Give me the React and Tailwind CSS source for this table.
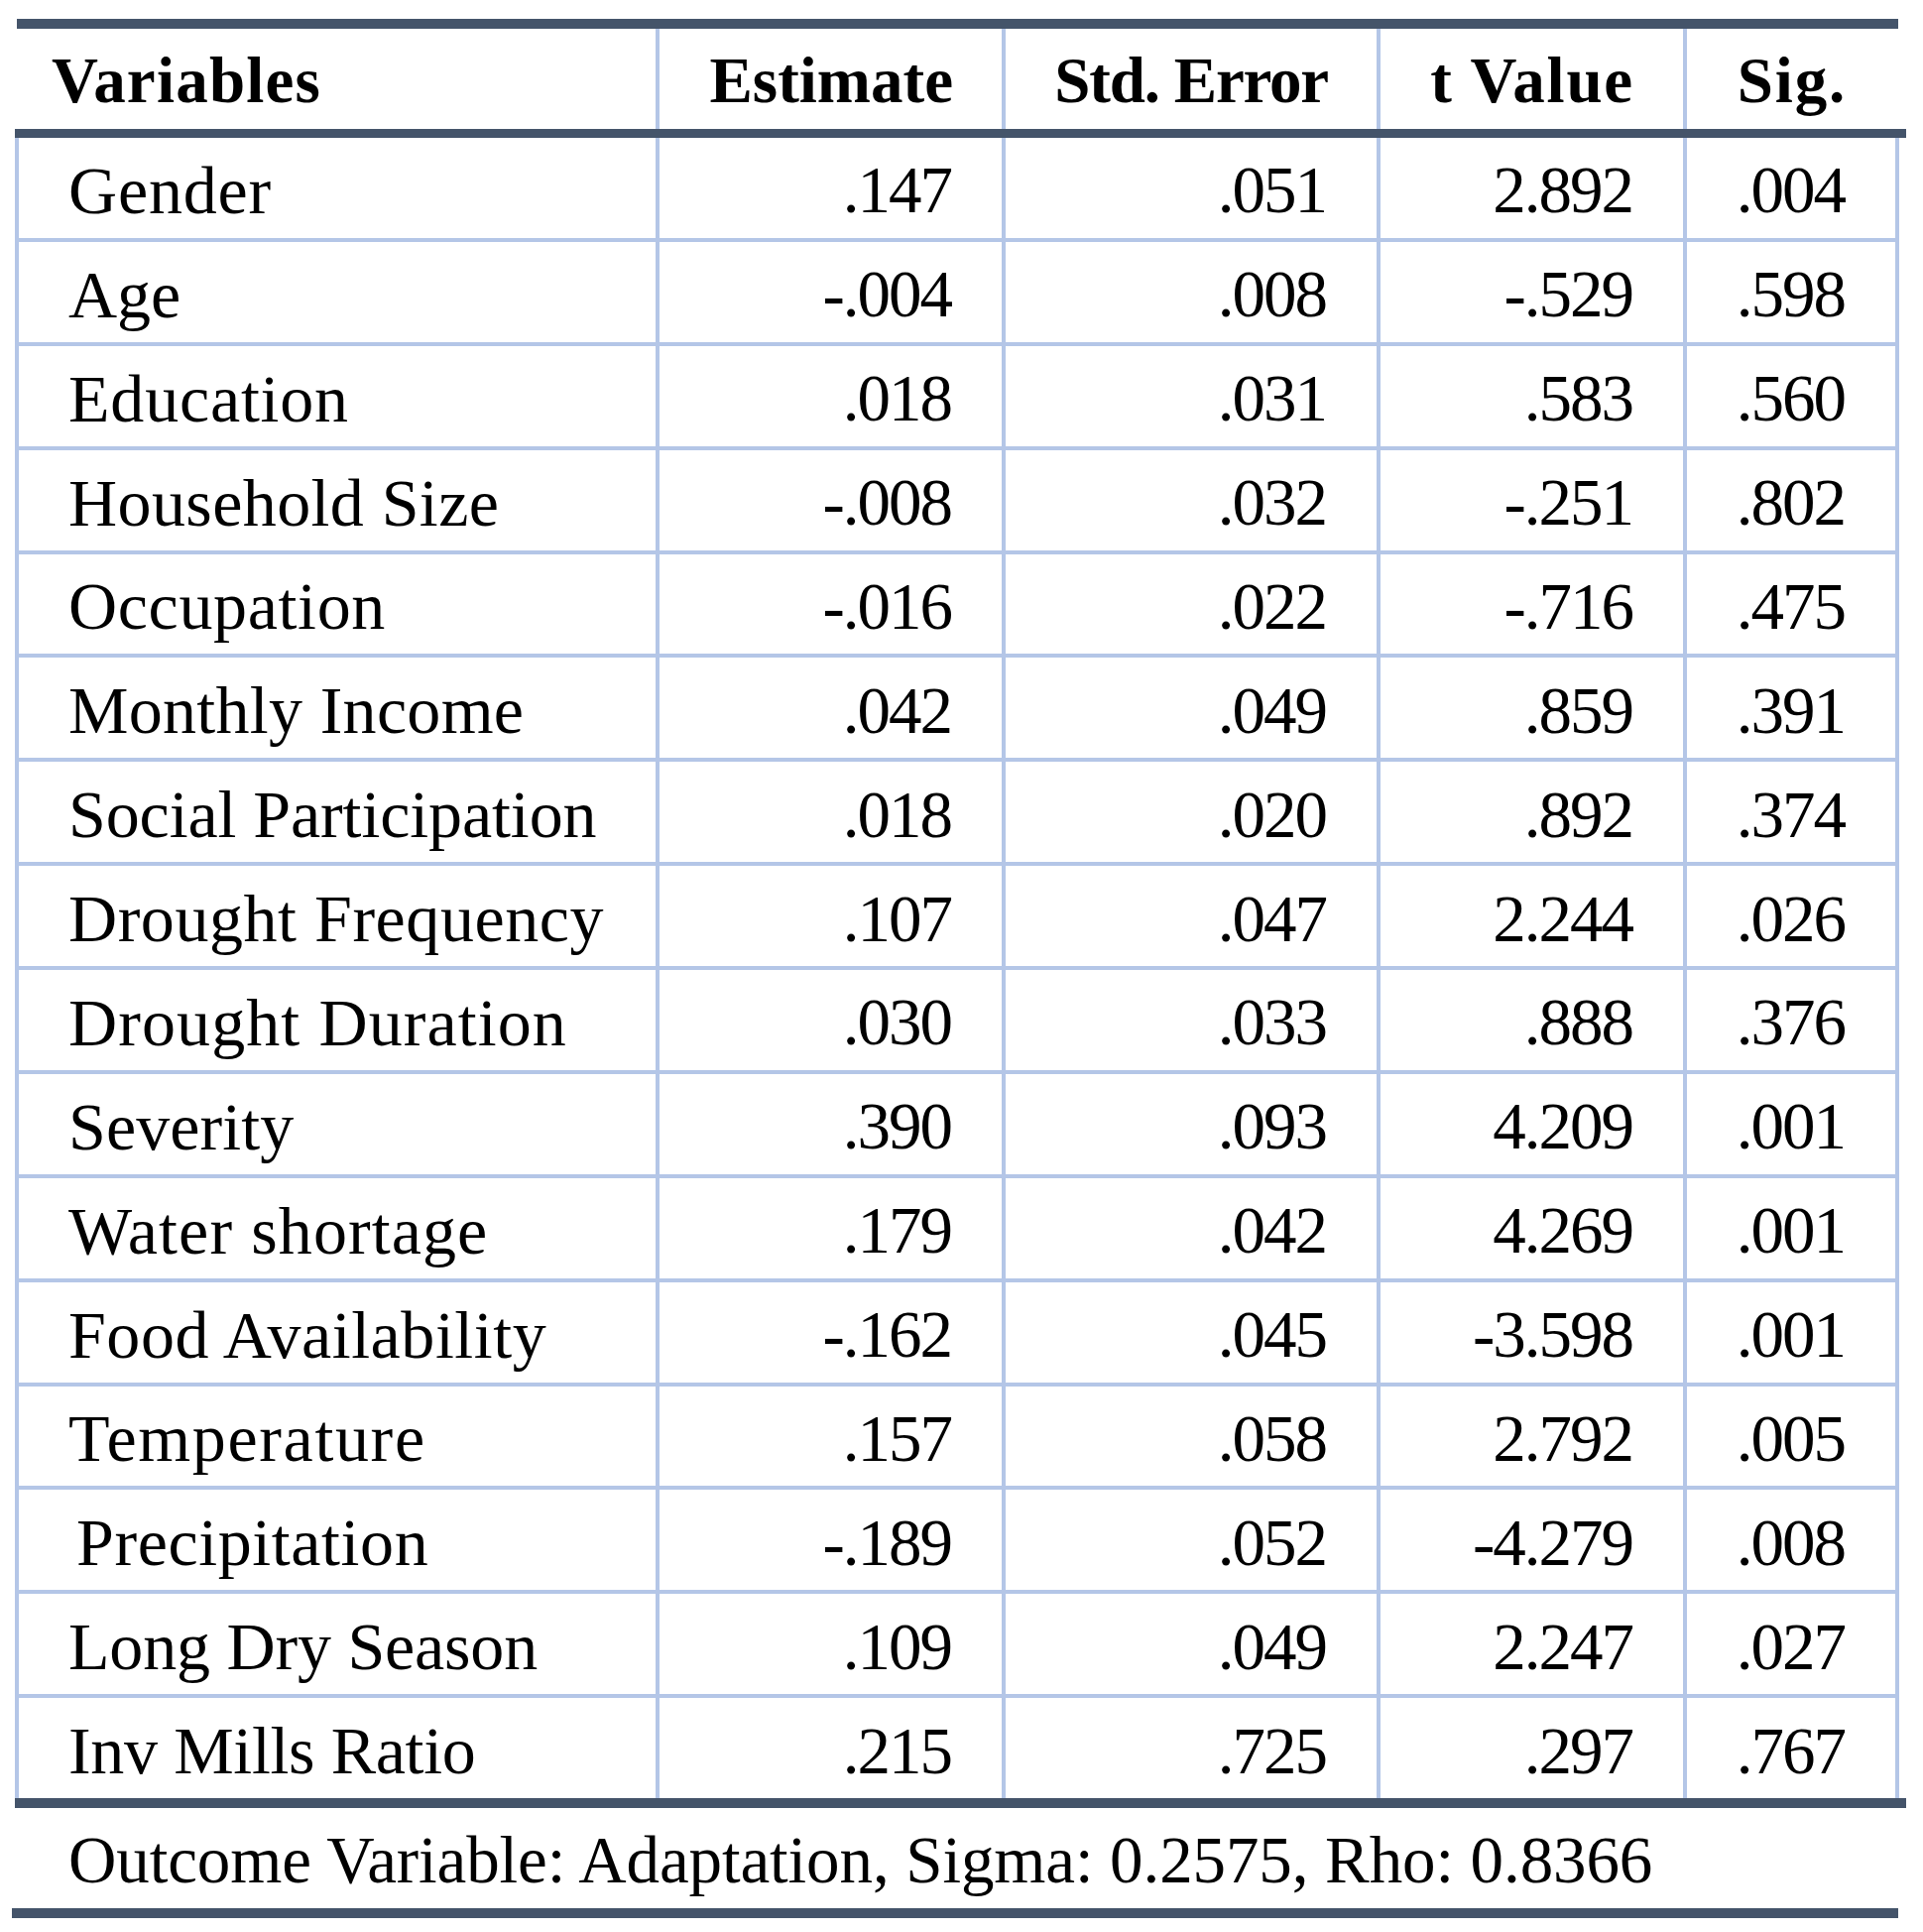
const HEADERS = [
  { label: "Variables", track: "tracking-[1.2px]" },
  { label: "Estimate", track: "" },
  { label: "Std. Error", track: "tracking-[-1.2px]" },
  { label: "t Value", track: "tracking-[1.8px]" },
  { label: "Sig.", track: "tracking-[1.8px]" },
];

// name, estimate, std error, t value, sig, tracking for the name, left padding
const ROWS = [
  ["Gender", ".147", ".051", "2.892", ".004", "tracking-[0.8px]"],
  ["Age", "-.004", ".008", "-.529", ".598", "tracking-[0px]"],
  ["Education", ".018", ".031", ".583", ".560", "tracking-[0.8px]"],
  ["Household Size", "-.008", ".032", "-.251", ".802", "tracking-[0.4px]"],
  ["Occupation", "-.016", ".022", "-.716", ".475", "tracking-[0.65px]"],
  ["Monthly Income", ".042", ".049", ".859", ".391", "tracking-[0.3px]"],
  ["Social Participation", ".018", ".020", ".892", ".374", "tracking-[-0.1px]"],
  ["Drought Frequency", ".107", ".047", "2.244", ".026", "tracking-[0.55px]"],
  ["Drought Duration", ".030", ".033", ".888", ".376", "tracking-[1.1px]"],
  ["Severity", ".390", ".093", "4.209", ".001", "tracking-[0.1px]"],
  ["Water shortage", ".179", ".042", "4.269", ".001", "tracking-[1.1px]"],
  ["Food Availability", "-.162", ".045", "-3.598", ".001", "tracking-[0.55px]"],
  ["Temperature", ".157", ".058", "2.792", ".005", "tracking-[1.65px]"],
  ["Precipitation", "-.189", ".052", "-4.279", ".008", "tracking-[0.6px]", "pl-[58px]"],
  ["Long Dry Season", ".109", ".049", "2.247", ".027", "tracking-[-0.2px]"],
  ["Inv Mills Ratio", ".215", ".725", ".297", ".767", "tracking-[-0.35px]"],
];

const COL_WIDTHS = ["w-[646px]", "w-[349px]", "w-[378px]", "w-[309px]", "w-[210px]"];

function HeaderRow() {
  return (
    <div className="ml-[15px] flex h-[101px] w-[1900px] border-x-4 border-transparent">
      {HEADERS.map((h, i) => (
        <div
          key={h.label}
          className={`${COL_WIDTHS[i]} flex h-full items-center pt-[4px] text-[65px] font-bold leading-none ${h.track} ${
            i < HEADERS.length - 1 ? "border-r-4 border-[#b4c6e7]" : ""
          } ${i === 0 ? "justify-start pl-[33px]" : "justify-end pr-[49px]"}`}
        >
          {h.label}
        </div>
      ))}
    </div>
  );
}

function BodyRow({ row, last }) {
  const [name, est, se, t, sig, track, pad] = row;
  const values = [est, se, t, sig];
  return (
    <div
      className={`flex w-[1900px] border-x-4 border-[#b4c6e7] ${
        last ? "h-[100.875px]" : "h-[104.875px] border-b-4"
      }`}
    >
      <div
        className={`${COL_WIDTHS[0]} flex h-full items-center border-r-4 border-[#b4c6e7] pt-[5px] text-[68px] ${track} ${
          pad ?? "pl-[50px]"
        }`}
      >
        {name}
      </div>
      {values.map((v, i) => (
        <div
          key={i}
          className={`${COL_WIDTHS[i + 1]} flex h-full items-center justify-end pr-[51px] pt-[5px] tracking-[-2px] ${
            i < 3 ? "border-r-4 border-[#b4c6e7]" : ""
          }`}
        >
          {v}
        </div>
      ))}
    </div>
  );
}

export default function App() {
  return (
    <div className="h-[1948px] w-[1939px] bg-white pt-[19px] font-['Liberation_Serif','Times_New_Roman',serif] text-black">
      <div className="ml-[17px] h-[10px] w-[1897px] bg-[#44546a]" />
      <HeaderRow />
      <div className="ml-[15px] h-[9px] w-[1907px] bg-[#44546a]" />
      <div className="ml-[15px] flex flex-col text-[67px] leading-none">
        {ROWS.map((row, i) => (
          <BodyRow key={row[0]} row={row} last={i === ROWS.length - 1} />
        ))}
      </div>
      <div className="ml-[15px] h-[10px] w-[1907px] bg-[#44546a]" />
      <div className="flex h-[101px] items-center pl-[69px] pt-[4px] text-[67px] leading-none tracking-[-0.1px]">
        Outcome Variable: Adaptation, Sigma: 0.2575, Rho: 0.8366
      </div>
      <div className="ml-[12px] h-[10px] w-[1902px] bg-[#44546a]" />
    </div>
  );
}
